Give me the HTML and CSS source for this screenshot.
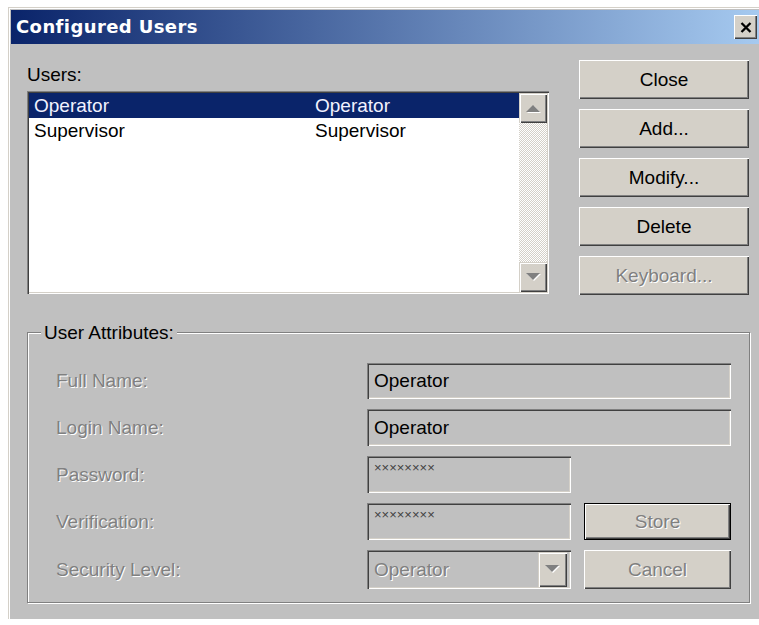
FILE: index.html
```html
<!DOCTYPE html>
<html lang="en">
<head>
<meta charset="utf-8">
<title>Configured Users</title>
<link rel="stylesheet" href="styles.css">
</head>
<body>
<div class="window">
  <div class="titlebar">
    <span class="title">Configured Users</span>
    <button class="close-box" type="button" aria-label="Close">
      <svg width="12" height="11" viewBox="0 0 12 11"><path d="M1.5 1 L10.5 10 M10.5 1 L1.5 10" stroke="#000" stroke-width="2.3"/></svg>
    </button>
  </div>

  <div class="client">
    <div class="top">
      <div class="users">
        <div class="label">Users:</div>
        <div class="listbox">
          <div class="rows">
            <div class="row selected"><span>Operator</span><span>Operator</span></div>
            <div class="row"><span>Supervisor</span><span>Supervisor</span></div>
          </div>
          <div class="vscroll">
            <div class="sbtn">
              <svg width="15" height="9" viewBox="0 0 15 9"><polygon points="8,2 15,9 1,9" fill="#fff"/><polygon points="7,1 14,8 0,8" fill="#808080"/></svg>
            </div>
            <div class="track"></div>
            <div class="sbtn">
              <svg width="15" height="9" viewBox="0 0 15 9"><polygon points="1,1 15,1 8,8" fill="#fff"/><polygon points="0,0 14,0 7,7" fill="#808080"/></svg>
            </div>
          </div>
        </div>
      </div>

      <div class="actions">
        <button class="btn" type="button">Close</button>
        <button class="btn" type="button">Add...</button>
        <button class="btn" type="button">Modify...</button>
        <button class="btn" type="button">Delete</button>
        <button class="btn disabled" type="button">Keyboard...</button>
      </div>
    </div>

    <div class="group">
      <div class="legend">User Attributes:</div>
      <div class="form">
        <span class="flabel">Full Name:</span>
        <div class="field wide">Operator</div>

        <span class="flabel">Login Name:</span>
        <div class="field wide">Operator</div>

        <span class="flabel">Password:</span>
        <div class="field secret">××××××××</div>
        <span></span>

        <span class="flabel">Verification:</span>
        <div class="field secret">××××××××</div>
        <button class="btn disabled default" type="button">Store</button>

        <span class="flabel">Security Level:</span>
        <div class="field combo">
          <span class="combo-text">Operator</span>
          <span class="drop">
            <svg width="15" height="9" viewBox="0 0 15 9"><polygon points="1,1 15,1 8,8" fill="#fff"/><polygon points="0,0 14,0 7,7" fill="#808080"/></svg>
          </span>
        </div>
        <button class="btn disabled" type="button">Cancel</button>
      </div>
    </div>
  </div>
</div>
</body>
</html>
```

FILE: styles.css
```css
html, body {
  margin: 0;
  padding: 0;
  background: #fff;
  overflow: hidden;
}

body {
  font-family: "Liberation Sans", Arial, sans-serif;
  font-size: 19px;
  color: #000;
}

/* dialog frame */
.window {
  box-sizing: border-box;
  width: 755px;
  margin: 7px 0 0 8px;
  padding: 2px;
  background: #c0c0c0;
  border-top: 1px solid #d4d0c8;
  border-left: 1px solid #d4d0c8;
  box-shadow: inset 1px 1px 0 #fff;
}

.titlebar {
  height: 34px;
  display: flex;
  align-items: center;
  justify-content: space-between;
  background: linear-gradient(to right, #0a246a, #a6caf0);
}

.title {
  padding-left: 5px;
  font-family: "DejaVu Sans", Tahoma, sans-serif;
  font-weight: bold;
  font-size: 18px;
  letter-spacing: 0.4px;
  line-height: 34px;
  color: #fff;
}

.close-box {
  width: 23px;
  height: 24px;
  margin-right: 4px;
  padding: 0;
  border: none;
  background: #d4d0c8;
  display: flex;
  align-items: center;
  justify-content: center;
  box-shadow: inset 1px 1px 0 #fff, inset -1px -1px 0 #404040, inset -2px -2px 0 #808080;
}

/* dialog body */
.client {
  padding: 16px 9px 14px 16px;
}

.top {
  display: flex;
  gap: 30px;
}

.users {
  width: 522px;
  padding-top: 2px;
}

.label {
  line-height: 26px;
  margin-bottom: 3px;
}

.listbox {
  box-sizing: border-box;
  height: 203px;
  padding: 2px;
  display: flex;
  background: #fff;
  box-shadow: inset 1px 1px 0 #808080, inset 2px 2px 0 #404040, inset -1px -1px 0 #fff, inset -2px -2px 0 #d4d0c8;
}

.rows {
  flex: 1;
}

.row {
  display: grid;
  grid-template-columns: 281px 1fr;
  padding-left: 5px;
  line-height: 25px;
  white-space: nowrap;
}

.row.selected {
  background: #0a246a;
  color: #f2f2ff;
}

.vscroll {
  width: 28px;
  display: flex;
  flex-direction: column;
}

.sbtn {
  height: 30px;
  flex: none;
  background: #d4d0c8;
  display: flex;
  align-items: center;
  justify-content: center;
  box-shadow: inset 1px 1px 0 #d4d0c8, inset 2px 2px 0 #fff, inset -1px -1px 0 #404040, inset -2px -2px 0 #808080;
}

.track {
  flex: 1;
  background: repeating-conic-gradient(#d4d0c8 0 25%, #fff 0 50%) 0 0 / 2px 2px;
}

/* push buttons */
.actions {
  width: 170px;
  display: flex;
  flex-direction: column;
  gap: 10px;
}

.btn {
  box-sizing: border-box;
  height: 39px;
  padding: 0;
  border: none;
  background: #d4d0c8;
  font-family: inherit;
  font-size: 19px;
  color: #000;
  box-shadow: inset 1px 1px 0 #fff, inset -1px -1px 0 #404040, inset -2px -2px 0 #808080;
}

.btn.disabled {
  color: #808080;
  text-shadow: 1px 1px 0 #fff;
}

.form .btn {
  height: auto;
}

.btn.default {
  border: 1px solid #000;
}

/* group box */
.group {
  margin: 37px 2px 0 0;
  border: 1px solid #808080;
  box-shadow: inset 1px 1px 0 #fff, 1px 1px 0 #fff;
}

.legend {
  display: block;
  width: max-content;
  height: 26px;
  margin: -13px 0 0 13px;
  padding: 0 3px;
  line-height: 26px;
  background: #c0c0c0;
}

.form {
  margin-top: 17px;
  padding: 0 0 13px 28px;
  display: grid;
  grid-template-columns: 298px 204px 147px;
  grid-template-rows: 36px 37px 37px 37px 39px;
  column-gap: 13px;
  row-gap: 10px;
}

.flabel {
  align-self: center;
  color: #808080;
  text-shadow: 1px 1px 0 #fff;
  white-space: nowrap;
}

.field {
  box-sizing: border-box;
  padding: 2px 2px 2px 7px;
  display: flex;
  align-items: center;
  white-space: nowrap;
  box-shadow: inset 1px 1px 0 #808080, inset 2px 2px 0 #404040, inset -1px -1px 0 #fff, inset -2px -2px 0 #d4d0c8;
}

.field.wide {
  grid-column: 2 / span 2;
}

.field.secret {
  align-items: flex-start;
  padding-top: 6px;
  font-size: 13px;
  line-height: 12px;
  color: #404040;
}

.combo {
  padding-right: 4px;
  align-items: stretch;
}

.combo-text {
  flex: 1;
  align-self: center;
  color: #808080;
  text-shadow: 1px 1px 0 #fff;
}

.drop {
  width: 29px;
  background: #d4d0c8;
  display: flex;
  align-items: center;
  justify-content: center;
  box-shadow: inset 1px 1px 0 #d4d0c8, inset 2px 2px 0 #fff, inset -1px -1px 0 #404040, inset -2px -2px 0 #808080;
}
```
